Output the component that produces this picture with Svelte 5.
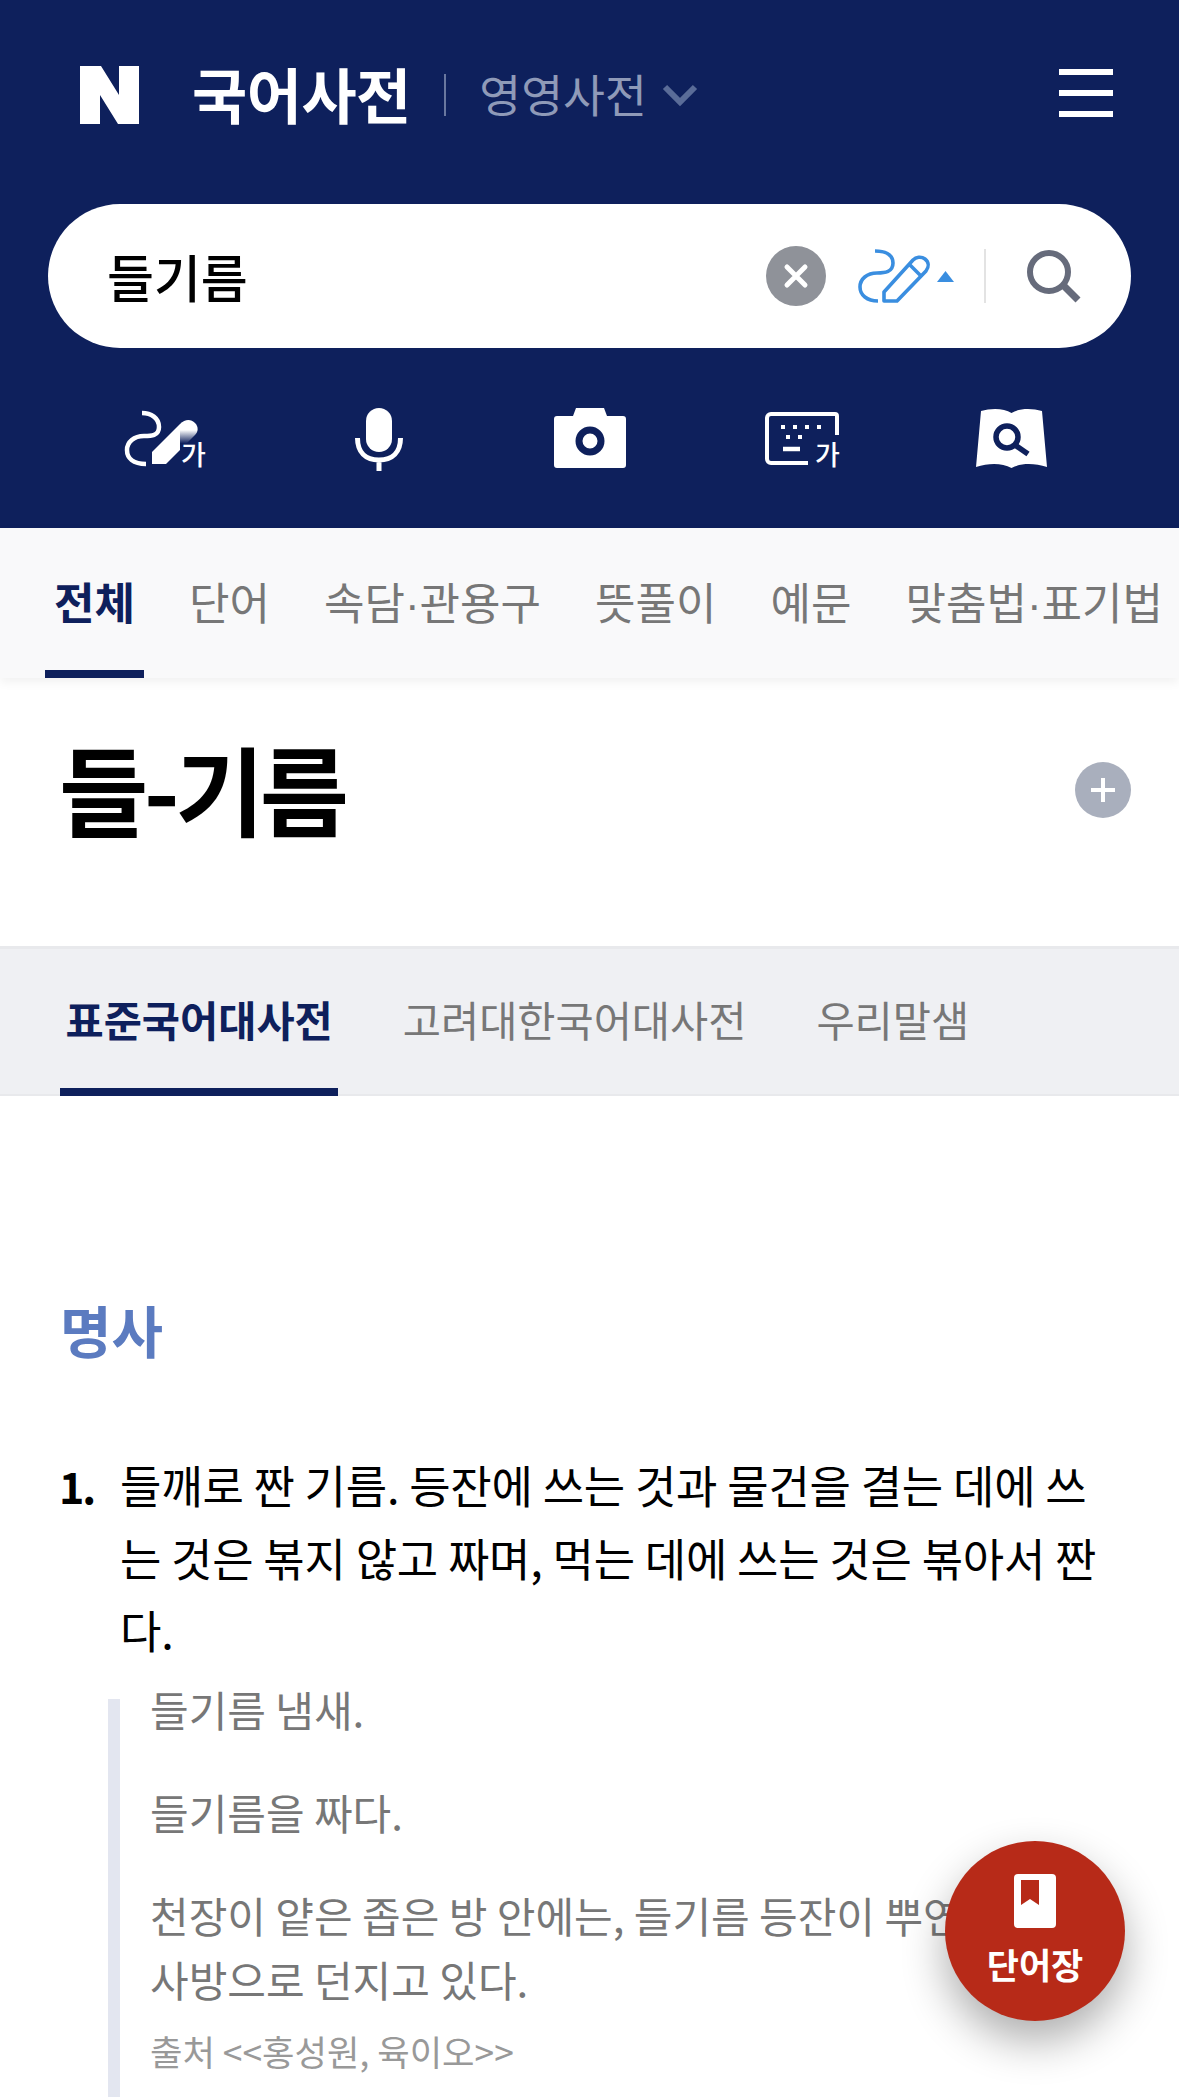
<script lang="ts">
	const tabs = ['전체', '단어', '속담·관용구', '뜻풀이', '예문', '맞춤법·표기법'];
	const dicts = ['표준국어대사전', '고려대한국어대사전', '우리말샘'];
</script>

<div class="page">
	<header class="header">
		<div class="topbar">
			<svg class="logo" viewBox="0 0 59 58" width="59" height="58" aria-label="N">
				<path d="M0 0h21l18 29V0h20v58H38L20 29v29H0z" fill="#fff" />
			</svg>
			<span class="brand">국어사전</span>
			<span class="divider"></span>
			<span class="alt">영영사전</span>
			<svg class="chev" viewBox="0 0 36 24" width="36" height="24">
				<path d="M3 4l15 15L33 4" fill="none" stroke="#5a6c98" stroke-width="6" />
			</svg>
			<svg class="menu" viewBox="0 0 54 48" width="54" height="48">
				<path d="M0 3h54M0 24h54M0 45h54" stroke="#fff" stroke-width="6" />
			</svg>
		</div>

		<div class="search">
			<span class="query">들기름</span>
			<svg class="clear" viewBox="0 0 60 60" width="60" height="60">
				<circle cx="30" cy="30" r="30" fill="#8f9299" />
				<path d="M21 21l18 18M39 21L21 39" stroke="#fff" stroke-width="5" stroke-linecap="round" />
			</svg>
			<svg class="pen" viewBox="0 0 98 56" width="98" height="56">
				<path d="M18 3c9 0 18 3 18 12s-8 10-16 10C10 25 3 31 3 39s7 14 18 14" fill="none" stroke="#3a8ee0" stroke-width="3.6" />
				<path d="M27 53V44L56 12c3-3 8-4 12-1s4 8 1 12L40 53z" fill="none" stroke="#3a8ee0" stroke-width="3.6" stroke-linejoin="round" />
				<path d="M53 17l12 12" stroke="#3a8ee0" stroke-width="3.6" />
				<path d="M80 34l8.5-11 8.5 11z" fill="#3a8ee0" />
			</svg>
			<span class="search-sep"></span>
			<svg class="glass" viewBox="0 0 54 54" width="54" height="54">
				<circle cx="22" cy="23" r="19" fill="none" stroke="#666b7b" stroke-width="6" />
				<path d="M36 36l15 15" stroke="#666b7b" stroke-width="7" />
			</svg>
		</div>

		<div class="tools">
			<svg viewBox="3 0 90 64" width="90" height="64">
				<defs>
					<linearGradient id="fade" x1="0" y1="0" x2="0" y2="1">
						<stop offset="0" stop-color="#0e205c" stop-opacity="0" />
						<stop offset="0.32" stop-color="#0e205c" />
					</linearGradient>
				</defs>
				<path d="M22 5c9 0 17 5 17 14s-8 9-15 9C14 28 7 34 7 42s6 14 19 14" fill="none" stroke="#fff" stroke-width="4.5" />
				<path d="M32 44L60 16c5-5 11-5 15-1s3 9 0 12L46 56H32z" fill="#fff" />
				<rect x="60" y="22" width="30" height="42" fill="url(#fade)" />
				<text x="61" y="57" class="ga">가</text>
			</svg>
			<svg viewBox="0 0 48 64" width="48" height="64">
				<rect x="11" y="0" width="26" height="44" rx="13" fill="#fff" />
				<path d="M2.5 30c0 14 8 22 21.500 22s21.500-8 21.500-22M24 52v11" fill="none" stroke="#fff" stroke-width="5" />
			</svg>
			<svg viewBox="0 0 72 64" width="72" height="64">
				<path d="M3 8h16l3-8h28l3 8h16a3 3 0 0 1 3 3v46a3 3 0 0 1-3 3H3a3 3 0 0 1-3-3V11a3 3 0 0 1 3-3z" fill="#fff" />
				<circle cx="36" cy="33" r="11" fill="none" stroke="#0e205c" stroke-width="7" />
			</svg>
			<svg viewBox="0 0 78 64" width="78" height="64">
				<path d="M46 55H9a4 4 0 0 1-4-4V10a4 4 0 0 1 4-4h64a2 2 0 0 1 2 2v19" fill="none" stroke="#fff" stroke-width="4" />
				<path d="M21 17v4M33 17v4M45 17v4M57 17v4M26 27v4M38 27v4" stroke="#fff" stroke-width="4" />
				<path d="M21 41h17" stroke="#fff" stroke-width="4.5" />
				<text x="53" y="57" class="ga">가</text>
			</svg>
			<svg viewBox="0 0 71 64" width="71" height="64">
				<path d="M5 3C15 0 28 0 35.500 5 43 0 56 0 66 3L71 59C58 55 45 55 35.500 60 26 55 13 55 0 59z" fill="#fff" />
				<circle cx="31" cy="29" r="11" fill="none" stroke="#0e205c" stroke-width="5.500" />
				<path d="M39 37l13 9" stroke="#0e205c" stroke-width="5.500" />
			</svg>
		</div>
	</header>

	<nav class="tabs">
		{#each tabs as tab, i}
			<span class="tab" class:active={i === 0}>
				{#each tab.split('·') as part, j}{#if j}<span class="dot">·</span>{/if}{part}{/each}
			</span>
		{/each}
	</nav>

	<section class="entry">
		<h1 class="word">들-기름</h1>
		<svg class="add" viewBox="0 0 56 56" width="56" height="56">
			<circle cx="28" cy="28" r="28" fill="#a9afbd" />
			<path d="M28 16v24M16 28h24" stroke="#fff" stroke-width="4" />
		</svg>
	</section>

	<nav class="dicts">
		{#each dicts as dict, i}
			<span class="dict" class:active={i === 0}>{dict}</span>
		{/each}
	</nav>

	<main class="body">
		<h2 class="pos">명사</h2>
		<div class="def">
			<span class="num">1.</span>
			<p class="meaning">들깨로 짠 기름. 등잔에 쓰는 것과 물건을 결는 데에 쓰는 것은 볶지 않고 짜며, 먹는 데에 쓰는 것은 볶아서 짠다.</p>
		</div>
		<div class="examples">
			<p>들기름 냄새.</p>
			<p>들기름을 짜다.</p>
			<p class="long">천장이 얕은 좁은 방 안에는, 들기름 등잔이 뿌연<br />사방으로 던지고 있다.</p>
			<p class="source">출처 &lt;&lt;홍성원, 육이오&gt;&gt;</p>
		</div>
	</main>

	<button class="fab">
		<svg viewBox="0 0 42 54" width="42" height="54">
			<path d="M4 0h34a4 4 0 0 1 4 4v46a4 4 0 0 1-4 4H4a4 4 0 0 1-4-4V4a4 4 0 0 1 4-4z" fill="#fff" />
			<path d="M7 6h18v25l-9-6-9 6z" fill="#b72a18" />
		</svg>
		<span>단어장</span>
	</button>
</div>

<style>
	:global(body) {
		margin: 0;
		background: #fff;
	}

	.page {
		position: relative;
		width: 1179px;
		height: 2097px;
		overflow: hidden;
		background: #fff;
		font-family: 'Noto Sans CJK KR', 'Noto Sans', sans-serif;
	}

	.header {
		height: 528px;
		box-sizing: border-box;
		padding-top: 62px;
		background: #0e205c;
	}

	.topbar {
		display: flex;
		align-items: center;
		height: 62px;
		padding: 0 66px 0 80px;
	}

	.logo {
		margin-top: 3px;
	}

	.brand {
		margin: 0 0 2px 53px;
		font-size: 60px;
		font-weight: 700;
		letter-spacing: -0.5px;
		color: #fff;
	}

	.divider {
		width: 2px;
		height: 42px;
		margin: 4px 33px 0 33.500px;
		background: #69779f;
	}

	.alt {
		font-size: 45.500px;
		color: #8f9ab8;
	}

	.chev {
		margin: 4px 0 0 15px;
	}

	.menu {
		margin-left: auto;
	}

	.search {
		display: flex;
		align-items: center;
		height: 144px;
		margin: 80px 48px 0;
		padding: 0 50px 0 59px;
		border-radius: 72px;
		background: #fff;
	}

	.query {
		font-size: 51px;
		font-weight: 500;
		color: #000;
	}

	.clear {
		margin-left: auto;
	}

	.pen {
		margin-left: 31px;
	}

	.search-sep {
		width: 2px;
		height: 54px;
		margin: 0 41px 0 29px;
		background: #e3e3e3;
	}

	.tools {
		display: grid;
		grid-template-columns: repeat(5, 211px);
		justify-content: center;
		justify-items: center;
		align-items: start;
		margin-top: 60px;
	}

	.tools svg {
		display: block;
	}

	.ga {
		font-size: 27px;
		font-weight: 500;
		fill: #fff;
	}

	.tabs {
		position: relative;
		display: flex;
		gap: 36px;
		height: 150px;
		box-sizing: border-box;
		padding-left: 45px;
		background: #f9f9fa;
		box-shadow: 0 4px 10px rgba(0, 0, 0, 0.06);
		white-space: nowrap;
	}

	.tab {
		padding: 0 9px;
		font-size: 44px;
		line-height: 146px;
		color: #777;
	}

	.dot {
		font-family: 'Liberation Sans', sans-serif;
	}

	.tab.active {
		height: 142px;
		font-weight: 700;
		color: #0e205c;
		border-bottom: 8px solid #0e205c;
	}

	.entry {
		display: flex;
		justify-content: space-between;
		align-items: flex-start;
		height: 268px;
		box-sizing: border-box;
		padding: 0 48px 0 59px;
	}

	.word {
		margin: 37px 0 0;
		font-size: 97px;
		line-height: 144px;
		font-weight: 700;
		letter-spacing: -4.500px;
		color: #000;
	}

	.add {
		margin-top: 84px;
	}

	.dicts {
		display: flex;
		gap: 59px;
		height: 150px;
		box-sizing: border-box;
		padding-left: 60px;
		background: #eff0f3;
		border-top: 3px solid #e8e9ec;
		border-bottom: 2px solid #e8e9ec;
	}

	.dict {
		padding: 0 5.500px;
		font-size: 41.500px;
		line-height: 140px;
		color: #777;
	}

	.dict.active {
		box-sizing: border-box;
		margin-bottom: -2px;
		font-weight: 700;
		color: #0e205c;
		border-bottom: 8px solid #0e205c;
	}

	.body {
		padding: 0 48px 0 60px;
	}

	.pos {
		margin: 193px 0 0;
		font-size: 56px;
		line-height: 80px;
		font-weight: 700;
		color: #5b7bc0;
	}

	.def {
		display: flex;
		margin-top: 80px;
		font-size: 45px;
		line-height: 72.500px;
		letter-spacing: -0.200px;
		color: #000;
	}

	.num {
		flex: none;
		width: 60px;
		margin-left: -1px;
		font-size: 43px;
		font-weight: 700;
		letter-spacing: -2px;
	}

	.meaning {
		margin: 0 0 0 1px;
		width: 990px;
	}

	.examples {
		display: flow-root;
		margin: 32px 0 0 48px;
		padding-left: 30px;
		border-left: 12px solid #e3e6f0;
		height: 500px;
		font-size: 42px;
		color: #777;
	}

	.examples p {
		margin: 0 0 39px;
		line-height: 64px;
	}

	.examples p:first-child {
		margin-top: -22px;
	}

	.examples .long {
		margin-bottom: 0;
	}

	.examples .source {
		margin-top: 10px;
		font-size: 35.300px;
		line-height: 60px;
		color: #999;
	}

	.fab {
		position: absolute;
		left: 945px;
		top: 1841px;
		display: flex;
		flex-direction: column;
		align-items: center;
		width: 180px;
		height: 180px;
		box-sizing: border-box;
		padding: 33px 0 0;
		border: 0;
		border-radius: 50%;
		background: #b72a18;
		box-shadow: 0 20px 44px rgba(0, 0, 0, 0.32);
		font-family: inherit;
	}

	.fab span {
		margin-top: 10px;
		font-size: 35px;
		line-height: 52px;
		font-weight: 700;
		color: #fff;
	}
</style>
